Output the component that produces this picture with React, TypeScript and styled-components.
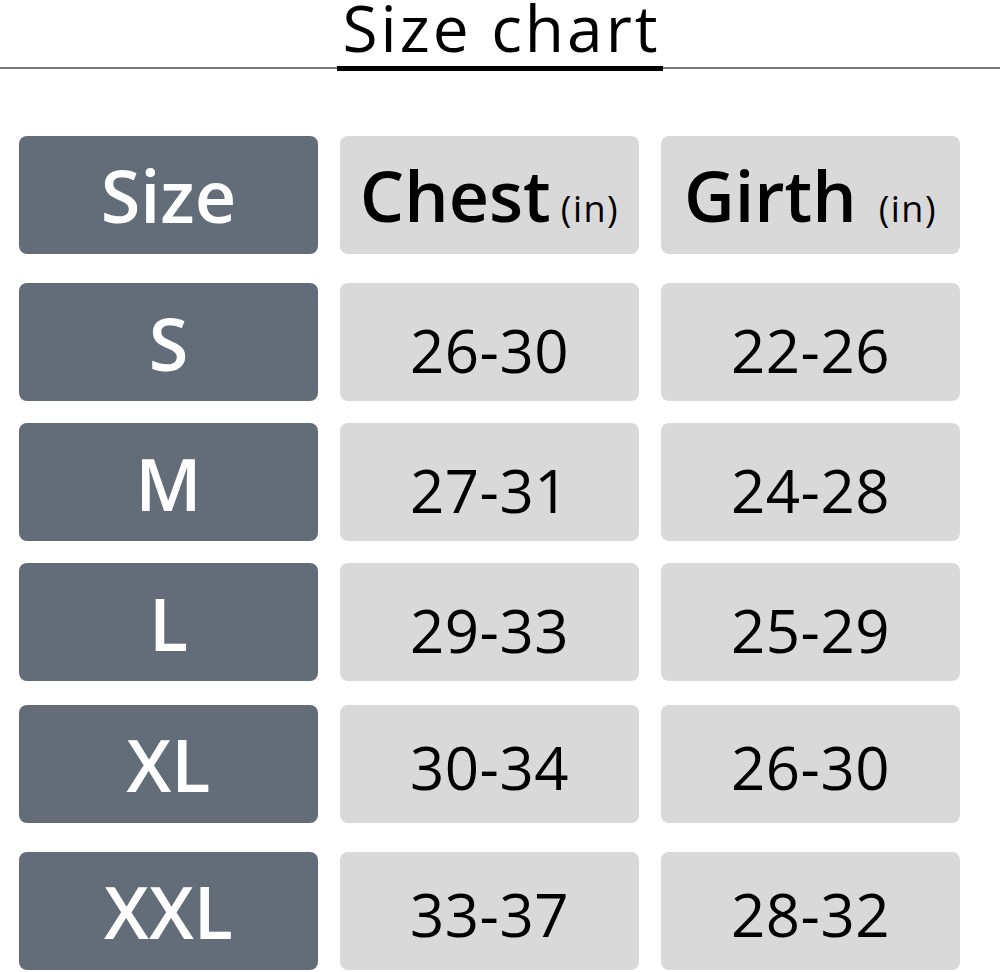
import styled, { createGlobalStyle } from "styled-components";

const GlobalStyle = createGlobalStyle`
  body {
    margin: 0;
    background: #ffffff;
    font-family: "Open Sans", "Noto Sans", sans-serif;
  }
`;

const Page = styled.div`
  width: 1000px;
  height: 972px;
  background: #ffffff;
  overflow: hidden;
`;

const TitleBar = styled.div`
  display: flex;
  align-items: flex-end;
  height: 71px;
`;

const Rule = styled.div`
  flex: 1;
  height: 2px;
  background: #777777;
  margin-bottom: 2px;
`;

const Title = styled.h1`
  margin: 0;
  padding: 0 2px 10px 5px;
  font-size: 64px;
  font-weight: 500;
  line-height: 56px;
  letter-spacing: 3px;
  color: #000000;
  border-bottom: 5px solid #000000;
  white-space: nowrap;
`;

const Chart = styled.div`
  display: flex;
  flex-direction: column;
  padding: 65px 40px 0 19px;
`;

const Row = styled.div<{ $gapAbove: number }>`
  display: grid;
  grid-template-columns: repeat(3, 299px);
  column-gap: 22px;
  margin-top: ${({ $gapAbove }) => `${$gapAbove}px`};
`;

const Cell = styled.div<{ $dark?: boolean; $shift?: number }>`
  height: 118px;
  box-sizing: border-box;
  display: flex;
  align-items: center;
  justify-content: center;
  padding-top: ${({ $shift }) => `${$shift ?? 0}px`};
  border-radius: 8px;
  background: ${({ $dark }) => ($dark ? "#636c79" : "#d9d9d9")};
  color: ${({ $dark }) => ($dark ? "#ffffff" : "#000000")};
`;

const SizeLabel = styled.span`
  font-size: 72px;
  font-weight: 600;
  line-height: 1;
`;

const HeadLabel = styled.span`
  font-size: 70px;
  font-weight: 600;
  line-height: 1;
  white-space: nowrap;
`;

const Unit = styled.span<{ $space: number }>`
  font-size: 36px;
  font-weight: 400;
  letter-spacing: 1.5px;
  margin-left: ${({ $space }) => `${$space}px`};
`;

const Value = styled.span`
  font-size: 60px;
  font-weight: 500;
  line-height: 1;
  letter-spacing: 0.5px;
`;

const rows = [
  { size: "S", chest: "26-30", girth: "22-26", gap: 29, shift: 16 },
  { size: "M", chest: "27-31", girth: "24-28", gap: 22, shift: 16 },
  { size: "L", chest: "29-33", girth: "25-29", gap: 22, shift: 16 },
  { size: "XL", chest: "30-34", girth: "26-30", gap: 24, shift: 6 },
  { size: "XXL", chest: "33-37", girth: "28-32", gap: 29, shift: 6 }
];

export default function App() {
  return (
    <Page>
      <GlobalStyle />
      <TitleBar>
        <Rule />
        <Title>Size chart</Title>
        <Rule />
      </TitleBar>
      <Chart>
        <Row $gapAbove={0}>
          <Cell $dark>
            <SizeLabel>Size</SizeLabel>
          </Cell>
          <Cell>
            <HeadLabel>
              Chest<Unit $space={10}>(in)</Unit>
            </HeadLabel>
          </Cell>
          <Cell>
            <HeadLabel>
              Girth<Unit $space={22}>(in)</Unit>
            </HeadLabel>
          </Cell>
        </Row>
        {rows.map((r) => (
          <Row key={r.size} $gapAbove={r.gap}>
            <Cell $dark $shift={r.shift - 14}>
              <SizeLabel>{r.size}</SizeLabel>
            </Cell>
            <Cell $shift={r.shift}>
              <Value>{r.chest}</Value>
            </Cell>
            <Cell $shift={r.shift}>
              <Value>{r.girth}</Value>
            </Cell>
          </Row>
        ))}
      </Chart>
    </Page>
  );
}
